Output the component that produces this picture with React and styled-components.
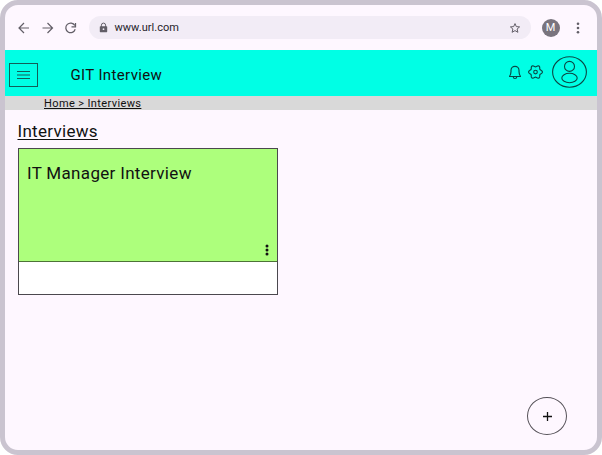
import React from "react";
import styled, { createGlobalStyle } from "styled-components";

const GlobalStyle = createGlobalStyle`
  * { box-sizing: border-box; }
  body { margin: 0; background: #fff; font-family: Roboto, "Liberation Sans", sans-serif; color: #111; }
  button { font: inherit; color: inherit; background: none; border: 0; padding: 0; display: flex; align-items: center; justify-content: center; }
  svg { display: block; flex: none; }
  h1, h2 { margin: 0; font-weight: 400; }
`;

const BrowserFrame = styled.div`
  width: 602px;
  height: 455px;
  border: 5px solid #cac4d0;
  border-radius: 18px;
  background: #fef7ff;
  overflow: hidden;
  display: flex;
  flex-direction: column;
`;

const BrowserBar = styled.div`
  height: 45px;
  flex: none;
  display: flex;
  align-items: center;
  padding: 0 11px 0 12px;
  color: #625e67;
`;

const NavButton = styled.button`
  width: 14px;
  height: 14px;
  margin-right: 9.5px;
`;

const AddressBar = styled.div`
  width: 442px;
  height: 23px;
  margin-left: 1px;
  border-radius: 12px;
  background: #f2ecf6;
  display: flex;
  align-items: center;
  padding: 0 10px 0 9.5px;
`;

const Url = styled.span`
  flex: 1;
  margin-left: 5.5px;
  font-size: 11px;
  line-height: 14px;
  letter-spacing: 0.04px;
  color: #25222a;
`;

const ProfileBadge = styled.div`
  width: 18px;
  height: 18px;
  margin-left: 11px;
  border-radius: 50%;
  background: #79747e;
  color: #fff;
  font-size: 11px;
  display: flex;
  align-items: center;
  justify-content: center;
`;

const BrowserMenu = styled.button`
  width: 14px;
  height: 14px;
  margin-left: 11px;
`;

const AppHeader = styled.header`
  height: 45.5px;
  flex: none;
  background: #00ffe5;
  display: flex;
  align-items: center;
  padding: 0 10px 0 4px;
`;

const MenuButton = styled.button`
  && {
    width: 29px;
    height: 24px;
    margin-top: 5px;
    border: 1px solid #125d58;
    color: #125d58;
  }
`;

const AppTitle = styled.h1`
  && {
    flex: 1;
    margin: 5px 0 0 32.5px;
    font-size: 15px;
    line-height: 20px;
    letter-spacing: 0.36px;
  }
`;

const HeaderActions = styled.div`
  display: flex;
  align-items: center;
  margin-top: -1px;
  color: #0b4845;
`;

const BellButton = styled.button`
  margin-right: 6px;
`;

const SettingsButton = styled.button`
  margin-right: 9px;
`;

const Breadcrumb = styled.nav`
  height: 14.5px;
  flex: none;
  padding: 1.2px 0 0 39px;
  background: #d9d9d9;
  font-size: 11px;
  line-height: 14px;
  letter-spacing: 0.38px;
  text-decoration: underline;
  text-decoration-thickness: 1px;
  text-underline-offset: 1px;
`;

const Content = styled.main`
  flex: 1;
  display: flex;
  flex-direction: column;
  padding: 10px 30px 15px 12.5px;
`;

const SectionTitle = styled.h2`
  font-size: 17px;
  line-height: 22px;
  letter-spacing: 0.3px;
  text-decoration: underline;
  text-decoration-thickness: 1px;
  text-underline-offset: 2px;
`;

const InterviewCard = styled.article`
  width: 260px;
  height: 147px;
  margin-top: 6px;
  margin-left: 0.5px;
  border: 1px solid #4b484e;
  background: #fff;
`;

const CardBody = styled.div`
  height: 113px;
  border-bottom: 1px solid #4d7338;
  background: #adff7c;
  display: flex;
  flex-direction: column;
  justify-content: space-between;
  align-items: flex-end;
  padding: 13px 8px 4px;
`;

const CardTitle = styled.div`
  align-self: stretch;
  font-size: 17px;
  line-height: 22px;
  letter-spacing: 0.32px;
`;

const AddButton = styled.button`
  && {
    width: 40px;
    height: 38px;
    margin: auto 0 0 auto;
    border: 1px solid #555158;
    border-radius: 50%;
  }
`;

const Icon = ({ w, h = w, box = `0 0 ${w} ${h}`, sw = 1, children }) => (
  <svg width={w} height={h} viewBox={box} fill="none" stroke="currentColor" strokeWidth={sw}>{children}</svg>
);

const Dots = ({ h = 14, gap = 4, r = 1.15 }) => (
  <Icon w={4} h={h}>
    {[-gap, 0, gap].map((d) => <circle key={d} cx="2" cy={h / 2 + d} r={r} fill="currentColor" stroke="none" />)}
  </Icon>
);

// Six rounded lobes, one pointing right.
const gearOutline = Array.from({ length: 72 }, (_, i) => {
  const a = (i * Math.PI) / 36;
  const r = 6 + 0.9 * Math.cos(6 * a);
  return `${(7.5 + r * Math.cos(a)).toFixed(2)},${(7 + r * Math.sin(a)).toFixed(2)}`;
}).join(" ");

export default function App() {
  return (
    <>
      <GlobalStyle />
      <BrowserFrame>
        <BrowserBar>
          <NavButton aria-label="Back"><Icon w={14} sw={1.2}><path d="M12 7H2.2M7 2L2 7l5 5" /></Icon></NavButton>
          <NavButton aria-label="Forward"><Icon w={14} sw={1.2}><path d="M1.5 7h9.8M6.5 2l5 5-5 5" /></Icon></NavButton>
          <NavButton aria-label="Reload">
            <Icon w={14} sw={1.25}><path d="M10.8 4.5A4.8 4.8 0 1 0 11.2 8.3M11.5 2v3.8h-4" /></Icon>
          </NavButton>
          <AddressBar>
            <Icon w={11}>
              <path d="M3.4 5V3.2a2.1 2.1 0 0 1 4.2 0V5" />
              <path d="M2.4 4.2h6.2q.6 0 .6.6v4.8q0 .6-.6.6H2.4q-.6 0-.6-.6V4.8q0-.6.6-.6z" fill="currentColor" stroke="none" />
              <circle cx="5.5" cy="7.2" r=".9" fill="#f2ecf6" stroke="none" />
            </Icon>
            <Url>www.url.com</Url>
            <Icon w={12}><path d="M6 1.600l1.300 3 3.300.3-2.500 2.100.8 3.300L6 8.600l-2.900 1.700.8-3.300L1.400 4.900l3.300-.3z" /></Icon>
          </AddressBar>
          <ProfileBadge>M</ProfileBadge>
          <BrowserMenu aria-label="Browser menu"><Dots gap={4.2} r={1.3} /></BrowserMenu>
        </BrowserBar>
        <AppHeader>
          <MenuButton aria-label="Menu"><Icon w={13} h={8}><path d="M0 .5h13M0 4h13M0 7.500h13" /></Icon></MenuButton>
          <AppTitle>GIT Interview</AppTitle>
          <HeaderActions>
            <BellButton aria-label="Notifications">
              <Icon w={14} h={15} sw={1.15}>
                <path d="M1.500 11.500C2.400 10.200 3 8.800 3 6.500V5.300a4 4 0 0 1 8 0v1.200c0 2.300.6 3.700 1.500 5zM5.300 12c0 2 3.400 2 3.400 0" strokeLinejoin="round" />
              </Icon>
            </BellButton>
            <SettingsButton aria-label="Settings">
              <Icon w={15} h={14} sw={1.15}>
                <polygon points={gearOutline} strokeLinejoin="round" />
                <circle cx="7.5" cy="7" r="1.8" />
              </Icon>
            </SettingsButton>
            <Icon w={35} h={32} sw={1.1}>
              <ellipse cx="17.5" cy="16" rx="16.900" ry="15.200" />
              <circle cx="17.5" cy="10.400" r="5" />
              <ellipse cx="17.5" cy="22" rx="7.700" ry="4.700" />
            </Icon>
          </HeaderActions>
        </AppHeader>
        <Breadcrumb>Home &gt; Interviews</Breadcrumb>
        <Content>
          <SectionTitle>Interviews</SectionTitle>
          <InterviewCard>
            <CardBody>
              <CardTitle>IT Manager Interview</CardTitle>
              <Dots r={1.5} />
            </CardBody>
          </InterviewCard>
          <AddButton aria-label="Add interview"><Icon w={11} sw={1.3}><path d="M5.5 1v9M1 5.500h9" /></Icon></AddButton>
        </Content>
      </BrowserFrame>
    </>
  );
}
